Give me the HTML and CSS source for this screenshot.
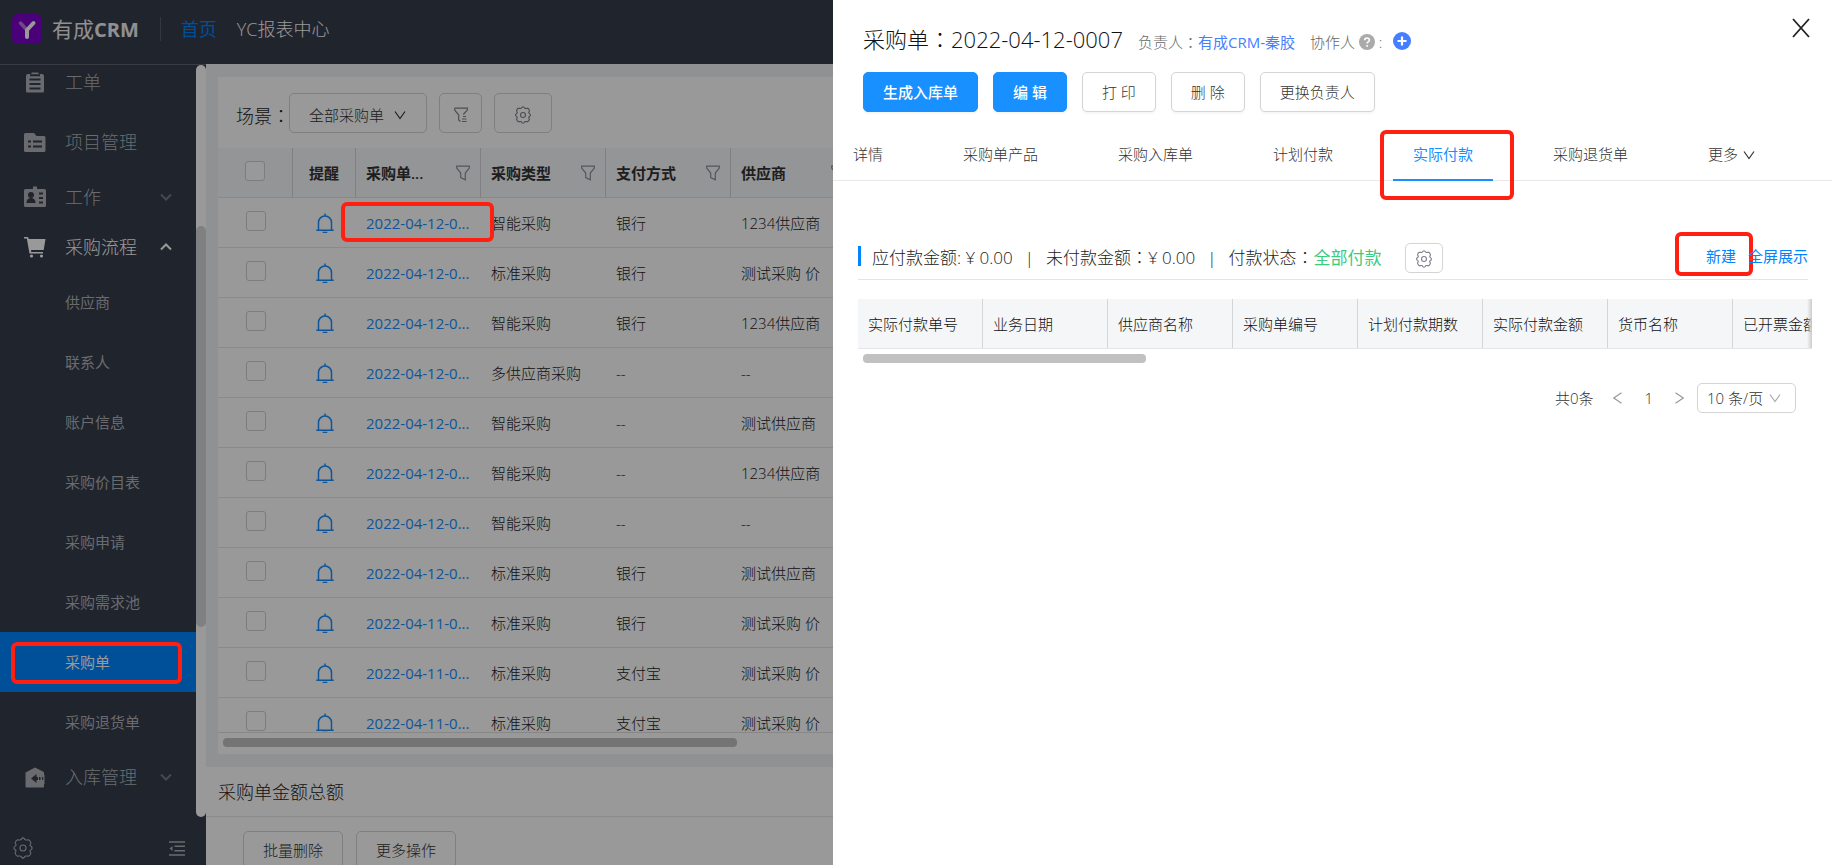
FILE: index.html
```html
<!DOCTYPE html>
<html lang="zh-CN">
<head>
<meta charset="utf-8">
<title>有成CRM</title>
<link rel="stylesheet" href="styles.css">
</head>
<body>
<svg class="sprite" aria-hidden="true">
  <symbol id="gear" viewBox="0 0 24 24"><path d="M9.500 3C10.600 2.300 10.500 1 12 1s1.400 1.300 2.500 2 2.600-.2 3.900.2 1.700 1.700 2.100 2.800-.9 2.100-.9 3 2.400 1.500 2.400 3-1.700 2-2.400 3 1.300 1.900.9 3-.8 2.400-2.100 2.800-2.800-.5-3.900.2-1 2-2.500 2-1.400-1.300-2.500-2-2.600.2-3.900-.2-1.700-1.700-2.100-2.800.9-2.100.9-3S2 13.500 2 12s1.700-2 2.400-3-1.300-1.900-.9-3 .8-2.400 2.100-2.800S8.400 3.700 9.500 3z"/><circle cx="12" cy="12" r="3.300"/></symbol>
  <symbol id="funnel" viewBox="0 0 14 16"><path d="M.7 1.200h12.600v1.900L9.300 8v6.800l-4.600-2.200V8L.7 3.100z"/></symbol>
  <symbol id="down" viewBox="0 0 12 10"><path d="M1 1.500 6 8.500 11 1.500"/></symbol>
  <symbol id="bell" viewBox="0 0 18 20"><path d="M2.500 17V9.500a6.500 6.500 0 0 1 13 0V17M.3 17.300h17.400M9 .6v2M6.700 19.400h4.600"/></symbol>
</svg>

<div class="app">
  <header class="topbar">
    <svg class="logo" viewBox="0 0 30 30" aria-hidden="true"><rect width="30" height="30" rx="6" fill="#7b00c8"/><path d="M8.500 9 14 15" stroke="#b77be0" stroke-width="3.500" stroke-linecap="round"/><path d="M21.500 9 15 16v7" fill="none" stroke="#fff" stroke-width="4" stroke-linecap="round" stroke-linejoin="round"/></svg>
    <span class="brand">有成<b>CRM</b></span>
    <nav class="topnav"><a class="on" href="#">首页</a><a href="#">YC报表中心</a></nav>
  </header>

  <div class="body">
    <aside class="side">
      <div class="side-scroll">
        <ul class="menu">
          <li class="item first"><svg class="mi" viewBox="0 0 22 22"><path d="M4 3h3.500V1.500h7V3H18a2 2 0 0 1 2 2v15a1.500 1.500 0 0 1-1.500 1.500h-15A1.500 1.500 0 0 1 2 20V5a2 2 0 0 1 2-2z"/><path class="cut" d="M6 4.300h10M5.500 8.500h11M5.500 13h11M5.500 17.500h11"/></svg><a href="#">工单</a></li>
          <li class="item tall"><svg class="mi" viewBox="0 0 22 22"><path d="M1.500 2H10l2.500 3H20a1.500 1.500 0 0 1 1.500 1.500v13A1.500 1.500 0 0 1 20 21H1.500A1.500 1.500 0 0 1 0 19.500v-16A1.500 1.500 0 0 1 1.500 2z"/><path class="cut" d="M4 10.500h3M9 10.500h9M4 15.500h3M9 15.500h9"/></svg><a href="#">项目管理</a></li>
          <li class="item"><svg class="mi" viewBox="0 0 22 22"><path d="M1.500 3H9V.5h4V3h7.500a1.500 1.500 0 0 1 1.500 1.500v15a1.500 1.500 0 0 1-1.500 1.500h-19A1.500 1.500 0 0 1 0 19.500v-15A1.500 1.500 0 0 1 1.500 3z"/><circle class="hole" cx="7" cy="9" r="3"/><path class="hole" d="M2.500 17c0-3.500 2-5 4.500-5s4.500 1.500 4.500 5z"/><path class="cut" d="M15 7.500h4M15 12h4M15 16.500h4"/></svg><a href="#">工作</a><svg class="chev" viewBox="0 0 12 8"><path d="m1 1.500 5 5 5-5"/></svg></li>
          <li class="item open"><svg class="mi" viewBox="0 0 22 22"><path d="M0 1h4l.8 2H21.500l-1.800 11H7l.3 2H19v1.500H5.500L2.800 2.500H0z"/><circle cx="7.500" cy="20" r="1.600"/><circle cx="17.500" cy="20" r="1.600"/></svg><a href="#">采购流程</a><svg class="chev" viewBox="0 0 12 8"><path d="m1 6.500 5-5 5 5"/></svg></li>
          <li class="sub"><a href="#">供应商</a></li>
          <li class="sub"><a href="#">联系人</a></li>
          <li class="sub"><a href="#">账户信息</a></li>
          <li class="sub"><a href="#">采购价目表</a></li>
          <li class="sub"><a href="#">采购申请</a></li>
          <li class="sub"><a href="#">采购需求池</a></li>
          <li class="sub current"><a href="#">采购单</a></li>
          <li class="sub"><a href="#">采购退货单</a></li>
          <li class="item"><svg class="mi" viewBox="0 0 22 22"><path d="M11 1.500 20 6v2.500h.5V18h-.5v2.500a1 1 0 0 1-1 1H2.500a1 1 0 0 1-1-1V6.500z"/><path class="hole" d="M7 12.500 12.500 8v3H14v3h-1.500v3zM15 11h1.500v3H15zM18 11h1.200v3H18z"/></svg><a href="#">入库管理</a><svg class="chev" viewBox="0 0 12 8"><path d="m1 1.500 5 5 5-5"/></svg></li>
        </ul>
        <div class="vbar"><i></i></div>
      </div>
      <div class="side-foot">
        <svg class="line gear20"><use href="#gear"/></svg>
        <svg class="line fold" viewBox="0 0 16 15"><path d="M0 1h16M5.500 5.300H16M5.500 9.700H16M0 14h16"/><path class="solid" d="M3.500 5v5L.5 7.500z"/></svg>
      </div>
    </aside>

    <main class="content">
      <section class="card">
        <div class="tools">
          <span class="scene">场景<span class="colon" lang="zh-TW">：</span></span>
          <button class="btn pick">全部采购单<svg class="line dn"><use href="#down"/></svg></button>
          <button class="btn b-filter" aria-label="筛选"><svg class="line fl" viewBox="0 0 14 16"><path d="M.7 1.200h12.600v1.900L9.300 7.500M.7 1.200v1.900L4.700 8v5l1.800 1.500M9 9.500h3M8 12h4.500M8 14.500h4.500"/></svg></button>
          <button class="btn b-gear" aria-label="设置"><svg class="line gear17"><use href="#gear"/></svg></button>
        </div>
        <div class="tbl-wrap">
          <table class="orders">
            <colgroup><col class="c-check"><col class="c-bell"><col class="c"><col class="c"><col class="c"><col class="c"><col></colgroup>
            <thead><tr><th class="mid"><input type="checkbox" aria-label="全选"></th><th class="mid">提醒</th>
              <th><div class="th">采购单...<svg class="line fn"><use href="#funnel"/></svg></div></th>
              <th><div class="th">采购类型<svg class="line fn"><use href="#funnel"/></svg></div></th>
              <th><div class="th">支付方式<svg class="line fn"><use href="#funnel"/></svg></div></th>
              <th><div class="th">供应商<svg class="line fn"><use href="#funnel"/></svg></div></th><th></th></tr></thead>
            <tbody id="rows"></tbody>
          </table>
        </div>
        <div class="hbar"><i></i></div>
      </section>
      <section class="summary">
        <h2>采购单金额总额</h2>
        <div class="batch"><button class="btn">批量删除</button><button class="btn">更多操作</button></div>
      </section>
    </main>
  </div>
</div>

<div class="mask"></div>
<div class="mark m-menu"></div>
<div class="mark m-order"></div>

<aside class="drawer">
  <button class="close" aria-label="关闭"><svg viewBox="0 0 18 20"><path d="M1 1 17 19M17 1 1 19"/></svg></button>
  <div class="head">
    <h1>采购单<span class="colon" lang="zh-TW">：</span>2022-04-12-0007</h1>
    <span>负责人<span class="colon" lang="zh-TW">：</span><a href="#">有成CRM-秦胶</a></span>
    <span class="co">协作人 <svg class="q" viewBox="0 0 16 16"><circle cx="8" cy="8" r="8" fill="#aaa"/><path d="M5.700 6.300c0-3.200 4.700-3 4.700-.2 0 1.800-2.300 1.700-2.300 3.400M8.100 11v1.700" fill="none" stroke="#fff" stroke-width="1.600"/></svg> :</span>
    <svg class="plus" viewBox="0 0 18 18"><circle cx="9" cy="9" r="9" fill="#457fff"/><path d="M9 4.500v9M4.500 9h9" stroke="#fff" stroke-width="2.200"/></svg>
  </div>
  <div class="acts">
    <button class="btn pri">生成入库单</button><button class="btn pri">编 辑</button><button class="btn">打 印</button><button class="btn">删 除</button><button class="btn">更换负责人</button>
  </div>
  <nav class="tabs">
    <a href="#">详情</a><a href="#">采购单产品</a><a href="#">采购入库单</a><a href="#">计划付款</a><a class="on" href="#">实际付款<i class="mark m-tab"></i></a><a href="#">采购退货单</a><a href="#">更多<svg class="line dn"><use href="#down"/></svg></a>
  </nav>
  <div class="panel">
    <div class="bar">
      <div class="sums"><span>应付款金额: ¥ 0.00</span><span>|</span><span>未付款金额<span class="colon" lang="zh-TW">：</span>¥ 0.00</span><span>|</span><span>付款状态<span class="colon" lang="zh-TW">：</span><em>全部付款</em></span></div>
      <button class="btn mini" aria-label="列设置"><svg class="line gear17"><use href="#gear"/></svg></button>
      <div class="links"><a href="#">新建<i class="mark m-new"></i></a><a href="#">全屏展示</a></div>
    </div>
    <div class="pay-wrap">
      <table class="pay"><thead><tr><th>实际付款单号</th><th>业务日期</th><th>供应商名称</th><th>采购单编号</th><th>计划付款期数</th><th>实际付款金额</th><th>货币名称</th><th>已开票金额</th></tr></thead></table>
    </div>
    <div class="pbar"><i></i></div>
    <div class="pager">
      <span>共0条</span>
      <button aria-label="上一页"><svg viewBox="0 0 9 12"><path d="M8.500.8.8 6l7.700 5.200"/></svg></button>
      <span class="page">1</span>
      <button aria-label="下一页"><svg viewBox="0 0 9 12"><path d="M.5.8 8.200 6 .5 11.200"/></svg></button>
      <label class="size"><select aria-label="每页条数"><option>10 条/页</option></select><svg class="line dn"><use href="#down"/></svg></label>
    </div>
  </div>
</aside>
<script src="rows.js"></script>
</body>
</html>
```

FILE: rows.js
```js
const orders = [
  ["2022-04-12-0...", "智能采购", "银行", "1234供应商"],
  ["2022-04-12-0...", "标准采购", "银行", "测试采购 价"],
  ["2022-04-12-0...", "智能采购", "银行", "1234供应商"],
  ["2022-04-12-0...", "多供应商采购", "--", "--"],
  ["2022-04-12-0...", "智能采购", "--", "测试供应商"],
  ["2022-04-12-0...", "智能采购", "--", "1234供应商"],
  ["2022-04-12-0...", "智能采购", "--", "--"],
  ["2022-04-12-0...", "标准采购", "银行", "测试供应商"],
  ["2022-04-11-0...", "标准采购", "银行", "测试采购 价"],
  ["2022-04-11-0...", "标准采购", "支付宝", "测试采购 价"],
  ["2022-04-11-0...", "标准采购", "支付宝", "测试采购 价"]
];
document.getElementById("rows").innerHTML = orders.map(([no, type, pay, vendor]) => `<tr>
  <td class="mid"><input type="checkbox" aria-label="选择"></td>
  <td class="mid"><svg class="line bell"><use href="#bell"/></svg></td>
  <td><a href="#">${no}</a></td><td>${type}</td><td>${pay}</td><td>${vendor}</td><td></td></tr>`).join("");
```

FILE: styles.css
```css
* { box-sizing: border-box; }
body { margin: 0; font: 300 15px/20px "Open Sans", "Noto Sans CJK SC", sans-serif; color: #222; overflow: hidden; }
a { color: inherit; text-decoration: none; }
button, select, input { font: inherit; color: inherit; margin: 0; }
ul { list-style: none; margin: 0; padding: 0; }
h1, h2 { margin: 0; font-weight: 300; }
i, em { font-style: normal; }
.sprite { position: absolute; width: 0; height: 0; }
.colon { font-family: "Noto Sans CJK TC", sans-serif; line-height: 1; }
.line { fill: none; stroke: currentColor; stroke-width: 1.2; flex: none; }
.gear17 { width: 18px; height: 18px; color: #7d828c; }
.gear17 use { stroke-width: 1.500; }
.gear20 { width: 22px; height: 22px; }
.dn { width: 12px; height: 10px; }
.btn { height: 40px; padding: 0 19px; border: 1px solid #d4d4d4; border-radius: 5px; background: #fff; color: #333; display: inline-flex; align-items: center; justify-content: center; white-space: nowrap; }

.app { height: 100vh; display: flex; flex-direction: column; overflow: hidden; }
.topbar { flex: none; height: 64px; display: flex; align-items: center; padding: 0 12px 6px; background: #353c4b; color: #fff; font-size: 18px; line-height: 24px; }
.logo { width: 30px; height: 30px; margin-right: 10px; }
.brand { font-size: 21px; font-weight: 400; color: #f0f0f0; }
.brand b { font-size: 20px; }
.topnav { display: flex; gap: 20px; margin-left: 21px; padding-left: 20px; border-left: 1px solid #575d69; }
.topnav .on { color: #0084ff; font-weight: 400; }
.body { flex: 1; min-height: 0; display: flex; }

.side { flex: none; width: 206px; display: flex; flex-direction: column; background: #353c4b; color: #b0b3b9; border-top: 1px solid #60656f; }
.side-scroll { flex: 1; min-height: 0; display: flex; }
.menu { flex: 1; overflow: hidden; }
.item { display: flex; align-items: center; height: 50px; padding: 0 24px; font-size: 18px; }
.item a { flex: 1; }
.item.first { height: 47px; padding-bottom: 13px; }
.item.tall { height: 60px; }
.item.open { color: #fff; }
.mi { width: 22px; height: 22px; margin-right: 19px; fill: currentColor; }
.mi .cut { fill: none; stroke: #353c4b; stroke-width: 2; }
.mi .hole { fill: #353c4b; }
.chev { width: 12px; height: 8px; fill: none; stroke: #757a84; stroke-width: 2; }
.open .chev { stroke: #fff; }
.sub { display: flex; align-items: center; height: 60px; padding-left: 65px; font-weight: 400; }
.sub.current { background: #0084ff; color: #fff; }
.vbar { width: 10px; border-radius: 5px; background: #fff; padding-top: 161px; }
.vbar i { display: block; height: 401px; border-radius: 5px; background: #d4d5d8; }
.side-foot { flex: none; height: 48px; display: flex; justify-content: space-between; align-items: center; padding: 14px 21px 0 12px; }
.fold { width: 16px; height: 15px; stroke-width: 1.500; }
.solid { fill: currentColor; stroke: none; }

.content { flex: 1; min-width: 0; display: flex; flex-direction: column; gap: 13px; padding-top: 13px; background: #f0f2f5; }
.card { flex: 1; min-height: 0; margin: 0 12px; display: flex; flex-direction: column; background: #fff; }
.tools { flex: none; height: 71px; padding: 1px 18px 0; display: flex; align-items: center; }
.scene { font-size: 18px; line-height: 24px; width: 53px; padding-top: 6px; white-space: nowrap; }
.pick { width: 138px; gap: 10px; margin-right: 12px; padding: 3px 19px 0; justify-content: flex-start; }
.b-filter { width: 43px; padding: 4px 0 0; margin-right: 12px; color: #7d828c; }
.b-gear { width: 58px; padding: 4px 0 0; }
.fl { width: 14px; height: 16px; }
.tbl-wrap { flex: 1; min-height: 0; overflow: hidden; border-bottom: 1px solid #e2e2e2; }
table { border-collapse: separate; border-spacing: 0; table-layout: fixed; }
.orders { width: 100%; }
.c-check { width: 75px; } .c-bell { width: 63px; } .c { width: 125px; }
th, td { height: 50px; padding: 0 10px; text-align: left; font-weight: 300; white-space: nowrap; border-bottom: 1px solid #e4e6ea; }
.orders th { background: #f7f8fa; border-right: 1px solid #d4d6d8; font-weight: 600; color: #333; }
.orders .mid { text-align: center; padding: 0; }
.orders td a, .bell { color: #1890ff; font-weight: 400; }
.th { display: flex; justify-content: space-between; align-items: center; }
.fn { width: 14px; height: 16px; color: #8a8f99; }
.bell { width: 18px; height: 20px; display: block; margin: auto; stroke-width: 1.500; }
input[type=checkbox] { appearance: none; width: 20px; height: 20px; border: 1px solid #d0d0d0; border-radius: 3px; background: #fff; display: block; margin: -4px auto 0; }
.hbar { flex: none; height: 21px; padding: 5px; }
.hbar i { display: block; width: 32.3%; height: 9px; border-radius: 4px; background: #c1c1c1; }
.summary { flex: none; height: 98px; overflow: hidden; background: #fff; }
.summary h2 { height: 50px; padding: 0 12px; font-size: 18px; line-height: 50px; border-bottom: 1px solid #e8e8e8; }
.batch { display: flex; gap: 13px; padding: 14px 37px; }
.batch .btn { height: 38px; }

.mask { position: fixed; inset: 0; background: rgba(0, 0, 0, .4); }
.mark { position: absolute; border: 4px solid #ff2011; border-radius: 6px; pointer-events: none; }
.m-menu { left: 11px; top: 642px; width: 171px; height: 42px; }
.m-order { left: 341px; top: 202px; width: 153px; height: 40px; }
.m-tab { inset: -4px -21px -21px -13px; }
.m-new { inset: -14px -17px -10px -31px; }

.drawer { position: fixed; top: 0; right: 0; bottom: 0; width: 54.53%; background: #fff; }
.close { position: absolute; right: 22px; top: 18px; width: 18px; height: 20px; padding: 0; border: 0; background: none; }
.close svg { display: block; width: 18px; height: 20px; fill: none; stroke: #222; stroke-width: 1.800; }
.head { display: flex; align-items: baseline; gap: 15px; height: 72px; padding: 24px 30px 0; color: #666; white-space: nowrap; }
.head h1 { font-size: 22px; line-height: 30px; color: #111; }
.head a { color: #457fff; font-weight: 400; }
.q { width: 16px; height: 16px; vertical-align: -2px; }
.plus { width: 18px; height: 18px; align-self: flex-start; margin-top: 8px; margin-left: -4px; }
.acts { display: flex; gap: 15px; padding: 0 30px; }
.acts .btn { box-shadow: 0 2px 2px rgba(0, 0, 0, .04); }
.acts .pri { background: #1890ff; border-color: #1890ff; color: #fff; font-weight: 500; }
.tabs { display: flex; gap: 40px; height: 69px; padding-top: 22px; border-bottom: 1px solid #e8e8e8; color: #333; white-space: nowrap; }
.tabs a { position: relative; height: 47px; padding: 10px 20px 0; }
.tabs .on { color: #1890ff; border-bottom: 2px solid #1890ff; font-weight: 400; }
.tabs .dn { margin-left: 5px; }
.panel { padding: 55px 20px 0 25px; }
.bar { display: flex; align-items: center; height: 44px; margin-right: 4px; border-bottom: 1px solid #e4e4e4; }
.sums { display: flex; gap: 12px; height: 20px; line-height: 24px; padding-left: 11px; margin: 0 24px 4px 0; border-left: 3px solid #0084ff; font-size: 17px; white-space: nowrap; }
.sums em { color: #3ccb7f; font-weight: 400; }
.mini { width: 38px; height: 30px; padding: 2px 0 0; }
.links { margin: 0 0 3px auto; display: flex; gap: 12px; color: #0084ff; white-space: nowrap; font-weight: 400; }
.links a { position: relative; }
.pay-wrap { position: relative; margin-top: 19px; overflow: hidden; }
.pay-wrap::after { content: ""; position: absolute; top: 0; right: 0; bottom: 1px; width: 5px; background: linear-gradient(to right, transparent, #ccc); }
.pay { width: 1000px; }
.pay th { background: #f5f6f8; border-right: 1px solid #d4d6d8; width: 125px; color: #111; }
.pbar { padding: 5px 5px 0; }
.pbar i { display: block; width: 30%; height: 9px; border-radius: 4px; background: #c1c1c1; }
.pager { display: flex; justify-content: flex-end; align-items: center; margin: 20px 16px 0; color: #333; }
.page { margin: 0 22px; }
.pager button { border: 0; padding: 0; background: none; width: 9px; height: 12px; }
.pager button:first-of-type { margin-left: 20px; }
.pager button svg { display: block; width: 9px; height: 12px; fill: none; stroke: #999; stroke-width: 1.200; }
.size { position: relative; margin-left: 13px; }
.size select { appearance: none; width: 99px; height: 30px; padding: 0 9px; border: 1px solid #d4d4d4; border-radius: 5px; background: #fff; display: block; }
.size .dn { position: absolute; right: 15px; top: 10px; color: #aaa; }
```
